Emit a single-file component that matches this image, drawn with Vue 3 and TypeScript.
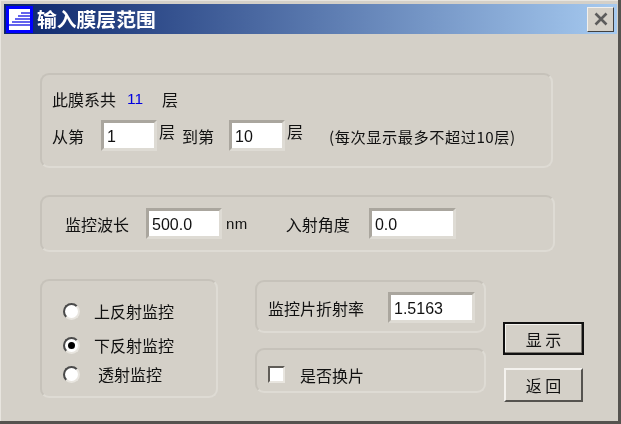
<template>
  <div class="dialog">
    <header class="titlebar">
      <svg class="titlebar__icon" viewBox="0 0 27 27">
        <rect width="27" height="27" fill="#0000ff" />
        <rect x="3" y="3" width="21" height="21" fill="#ffffff" />
        <path
          d="M15 7h9M12 10h12M9 13h15M6 16h18M3 19h21"
          stroke="#3030e8"
          stroke-width="1.4"
          fill="none"
        />
      </svg>
      <span class="titlebar__text">输入膜层范围</span>
      <span class="titlebar__close">
        <svg viewBox="0 0 14 14" width="14" height="14">
          <path d="M1.5 1.5l11 11M12.5 1.5l-11 11" stroke="#5c5c5c" stroke-width="2.6" />
        </svg>
      </span>
    </header>

    <main class="content">
      <section class="panel panel--range">
        <div class="row row--count">
          <span class="label">此膜系共</span>
          <span class="count">{{ layerCount }}</span>
          <span class="label">层</span>
        </div>
        <div class="row row--range">
          <span class="label">从第</span>
          <input class="field field--from" :value="fromLayer" readonly />
          <span class="label label--tight">层</span>
          <span class="label label--to">到第</span>
          <input class="field field--to" :value="toLayer" readonly />
          <span class="label label--tight">层</span>
          <span class="hint">(每次显示最多不超过10层)</span>
        </div>
      </section>

      <section class="panel panel--monitor">
        <span class="label">监控波长</span>
        <input class="field field--wave" value="500.0" readonly />
        <span class="unit">nm</span>
        <span class="label label--angle">入射角度</span>
        <input class="field field--angle" value="0.0" readonly />
      </section>

      <div class="bottom">
        <section class="panel panel--modes">
          <label v-for="mode in modes" :key="mode.text" class="mode" :class="mode.cls">
            <span class="radio" :class="{ 'radio--on': mode.checked }"></span>
            <span class="label">{{ mode.text }}</span>
          </label>
        </section>

        <div class="middle">
          <section class="panel panel--index">
            <span class="label">监控片折射率</span>
            <input class="field field--index" value="1.5163" readonly />
          </section>
          <section class="panel panel--swap">
            <span class="checkbox"></span>
            <span class="label">是否换片</span>
          </section>
        </div>

        <div class="actions">
          <button class="btn btn--default">显 示</button>
          <button class="btn">返 回</button>
        </div>
      </div>
    </main>
  </div>
</template>

<script setup lang="ts">
const layerCount = 11
const fromLayer = '1'
const toLayer = '10'

const modes = [
  { text: '上反射监控', checked: false, cls: 'mode--top' },
  { text: '下反射监控', checked: true, cls: 'mode--mid' },
  { text: '透射监控', checked: false, cls: 'mode--last' }
]
</script>

<style>
html,
body {
  margin: 0;
  background: #d4d0c8;
}
</style>

<style scoped>
.dialog {
  box-sizing: border-box;
  width: 621px;
  height: 424px;
  padding: 4px 4px 0;
  background: #d4d0c8;
  border-right: 3px solid #55534f;
  border-bottom: 3px solid #55534f;
  box-shadow: inset 1px 1px 0 #e8e5df;
  overflow: hidden;
  color: #111111;
  font-family: "Liberation Sans", "Noto Sans CJK SC", sans-serif;
  font-size: 15px;
  filter: blur(0.4px);
}

.titlebar {
  display: flex;
  align-items: center;
  height: 30px;
  width: 613px;
  padding-left: 2px;
  box-sizing: border-box;
  background: linear-gradient(90deg, #0a246a 0%, #a6caf0 100%);
}

.titlebar__icon {
  width: 27px;
  height: 27px;
  flex-shrink: 0;
}

.titlebar__text {
  margin-left: 4px;
  color: #ffffff;
  font-family: "Noto Sans CJK SC", sans-serif;
  font-size: 19.8px;
  font-weight: 700;
  line-height: 26px;
}

.titlebar__close {
  display: flex;
  align-items: center;
  justify-content: center;
  box-sizing: border-box;
  width: 27px;
  height: 25px;
  margin-left: auto;
  margin-right: 3px;
  background: #d4d0c8;
  border: 1px solid;
  border-color: #f2f0ec #404040 #404040 #f2f0ec;
}

.content {
  padding: 39px 0 0 36px;
}

.panel {
  box-sizing: border-box;
  border: 2px solid;
  border-color: #c6c2ba #dedbd4 #dedbd4 #c6c2ba;
  border-radius: 9px;
}

.row {
  display: flex;
  align-items: center;
}

.label {
  font-family: "Noto Sans CJK SC", sans-serif;
  font-size: 16px;
  line-height: 20px;
  white-space: nowrap;
}

.field {
  box-sizing: border-box;
  height: 31px;
  padding: 3px 0 0 3px;
  background: #ffffff;
  border: 3px solid;
  border-color: #aaa69e #dedbd4 #dedbd4 #aaa69e;
  outline: none;
  color: #111111;
  font-family: "Liberation Sans", sans-serif;
  font-size: 16px;
}

.panel--range {
  width: 513px;
  height: 95px;
  padding: 14px 0 0 10px;
}

.count {
  width: 17px;
  margin: 0 18px 0 11px;
  color: #0000e0;
  font-size: 15.5px;
}

.row--range {
  margin-top: 11px;
}

.field--from {
  width: 56px;
  margin-left: 17px;
}

.field--to {
  width: 56px;
  margin-left: 15px;
}

.label--tight {
  margin: -10px 0 0 2px;
}

.label--to {
  margin-left: 7px;
}

.hint {
  margin-left: 26px;
  font-family: "Noto Sans CJK SC", sans-serif;
  font-size: 15.2px;
  letter-spacing: 0.55px;
  white-space: nowrap;
}

.panel--monitor {
  display: flex;
  align-items: center;
  width: 515px;
  height: 57px;
  margin-top: 27px;
  padding-left: 23px;
}

.field--wave {
  width: 76px;
  margin-left: 17px;
}

.unit {
  margin: -1px 0 0 4px;
  font-size: 15px;
  letter-spacing: 0.5px;
}

.label--angle {
  margin-left: 38px;
}

.field--angle {
  width: 87px;
  margin-left: 19px;
}

.bottom {
  display: flex;
  align-items: flex-start;
  margin-top: 27px;
}

.panel--modes {
  width: 178px;
  height: 119px;
  padding-left: 21px;
  display: flex;
  flex-direction: column;
}

.mode {
  display: flex;
  align-items: center;
  gap: 14px;
  height: 20px;
}

.mode--top {
  margin-top: 20px;
}

.mode--mid {
  margin-top: 14px;
}

.mode--last {
  margin-top: 9px;
}

.mode--last .label {
  margin-left: 4px;
}

.radio {
  position: relative;
  box-sizing: border-box;
  width: 17px;
  height: 17px;
  flex-shrink: 0;
  background: #ffffff;
  border: 2px solid;
  border-color: #4a4a4a #e8e5df #e8e5df #4a4a4a;
  border-radius: 50%;
}

.radio--on::after {
  content: "";
  position: absolute;
  left: 3px;
  top: 3px;
  width: 7px;
  height: 7px;
  background: #000000;
  border-radius: 50%;
}

.middle {
  display: flex;
  flex-direction: column;
  gap: 15px;
  width: 231px;
  margin: 1px 0 0 37px;
}

.panel--index {
  display: flex;
  align-items: center;
  height: 53px;
  padding: 2px 0 0 11px;
}

.field--index {
  width: 87px;
  margin-left: 24px;
}

.panel--swap {
  display: flex;
  align-items: center;
  height: 45px;
  padding: 8px 0 0 11px;
}

.checkbox {
  box-sizing: border-box;
  width: 17px;
  height: 17px;
  margin-right: 15px;
  background: #ffffff;
  border: 2px solid;
  border-color: #605d58 #e8e5df #e8e5df #605d58;
}

.actions {
  display: flex;
  flex-direction: column;
  align-items: center;
  gap: 13px;
  width: 81px;
  margin: 43px 0 0 17px;
}

.btn {
  box-sizing: border-box;
  width: 79px;
  height: 34px;
  padding: 0;
  background: #d4d0c8;
  border: 2px solid;
  border-color: #f4f2ee #55534f #55534f #f4f2ee;
  color: #111111;
  font-family: "Noto Sans CJK SC", sans-serif;
  font-size: 16px;
}

.btn--default {
  width: 81px;
  height: 33px;
  border: 2px solid #111111;
  box-shadow: inset -1px -1px 0 #7a7770, inset 1px 1px 0 #f4f2ee;
}
</style>
